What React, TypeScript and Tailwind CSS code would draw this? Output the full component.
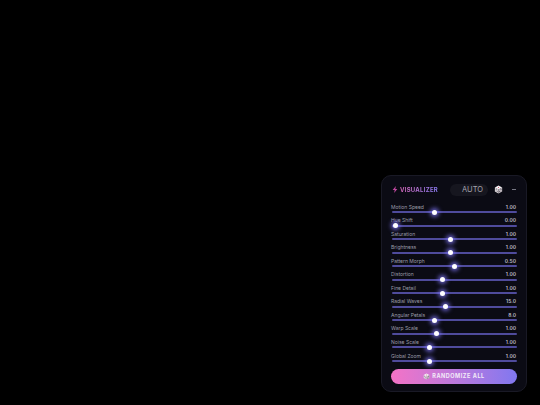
import React from 'react';

const sliders = [
  { label: 'Motion Speed', value: '1.00', pos: 34 },
  { label: 'Hue Shift', value: '0.00', pos: 3 },
  { label: 'Saturation', value: '1.00', pos: 47 },
  { label: 'Brightness', value: '1.00', pos: 47 },
  { label: 'Pattern Morph', value: '0.50', pos: 50 },
  { label: 'Distortion', value: '1.00', pos: 40.5 },
  { label: 'Fine Detail', value: '1.00', pos: 40.5 },
  { label: 'Radial Waves', value: '15.0', pos: 42.5 },
  { label: 'Angular Petals', value: '8.0', pos: 34 },
  { label: 'Warp Scale', value: '1.00', pos: 35.5 },
  { label: 'Noise Scale', value: '1.00', pos: 30 },
  { label: 'Global Zoom', value: '1.00', pos: 30 },
];

const Die = ({ size }: { size: number }) => (
  <svg width={size} height={size} viewBox="0 0 16 16">
    <path d="M8 1 14.5 4.5 8 8 1.5 4.5Z" fill="#f4f1f4" />
    <path d="M1.5 4.5 8 8V15L1.5 11.5Z" fill="#d9d4d8" />
    <path d="M14.5 4.5 8 8V15L14.5 11.5Z" fill="#bdb6bc" />
    <circle cx="8" cy="4.5" r="1" fill="#c2415b" />
    <circle cx="4" cy="8.5" r="0.9" fill="#5b5560" />
    <circle cx="5.8" cy="11" r="0.9" fill="#5b5560" />
    <circle cx="10" cy="11.5" r="0.9" fill="#5b5560" />
    <circle cx="12.5" cy="8" r="0.9" fill="#5b5560" />
  </svg>
);

const App = () => {
  return (
    <div className="w-[540px] h-[405px] bg-black flex items-end justify-end pr-[13px] pb-[13px] font-['Inter',sans-serif] overflow-hidden">
      <div className="w-[146px] h-[217px] rounded-[10px] bg-[#0b0b14] border border-[#191925] px-[9px] flex flex-col">
        {/* Header */}
        <div className="h-[27px] shrink-0 flex items-center">
          <svg width="6" height="7" viewBox="0 0 10 12" className="ml-[1px] mr-[2px]">
            <path d="M6.5 0 1 7H4.5L3.5 12 9 5H5.5Z" fill="#c0479f" />
          </svg>
          <span className="text-[6px] font-bold tracking-[0.25px] leading-none bg-gradient-to-r from-[#d869bd] to-[#8b7cf6] bg-clip-text text-transparent">
            VISUALIZER
          </span>
          <div className="ml-auto w-[38px] h-[12px] rounded-full bg-[#16161f] flex items-center justify-end pr-[5px]">
            <span className="text-[7.5px] leading-none text-[#a3a3ad]">AUTO</span>
          </div>
          <div className="ml-[6px] w-[9px] flex justify-center">
            <Die size={9} />
          </div>
          <div className="ml-[9px] mr-[1px] w-[4px] h-[1px] bg-[#777783]" />
        </div>

        {/* Sliders */}
        <div className="flex flex-col">
          {sliders.map((s) => (
            <div key={s.label} className="h-[13.55px] flex flex-col">
              <div className="h-[8px] pr-[1px] shrink-0 flex items-center justify-between">
                <span className="text-[5px] leading-none text-[#9c9ca8]">{s.label}</span>
                <span className="text-[5px] leading-none font-semibold text-[#bcbcc6]">{s.value}</span>
              </div>
              <div className="relative h-[2px] ml-[1px] shrink-0 rounded-full bg-[#4f4b9c]">
                <div
                  className="absolute top-1/2 w-[5px] h-[5px] -ml-[2.5px] -mt-[2.5px] rounded-full bg-white shadow-[0_0_4px_2px_rgba(129,120,255,0.75)]"
                  style={{ left: `${s.pos}%` }}
                />
              </div>
            </div>
          ))}
        </div>

        {/* Randomize */}
        <button className="mt-[3px] h-[15px] shrink-0 rounded-full bg-gradient-to-r from-[#f472c6] to-[#8077f0] flex items-center justify-center gap-[2px]">
          <Die size={7} />
          <span className="mt-[1px] text-[5.5px] font-bold tracking-[0.55px] leading-none text-[#f3eaf8]">RANDOMIZE ALL</span>
        </button>
      </div>
    </div>
  );
};

export default App;
